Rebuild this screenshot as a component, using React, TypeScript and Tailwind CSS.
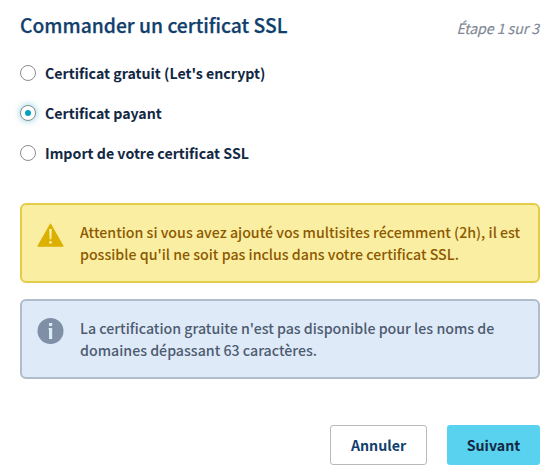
import { useState } from "react";

const options = ["Certificat gratuit (Let's encrypt)", "Certificat payant", "Import de votre certificat SSL"];

function WarningIcon() {
  return (
    <svg className="mt-[18px] h-6 w-[27px] shrink-0" viewBox="0 0 27 24">
      <path d="M13.5 .8 26.2 23.2H.8Z" fill="#dbb000" stroke="#dbb000" strokeLinejoin="round" />
      <path d="M12.2 6h2.6l-.4 10.3h-1.8Z" fill="#f9f0a5" />
      <circle cx="13.5" cy="19.4" r="1.4" fill="#f9f0a5" />
    </svg>
  );
}

function InfoIcon() {
  return (
    <svg className="mt-[17px] h-[26px] w-[27px] shrink-0" viewBox="0 0 27 26">
      <circle cx="13.5" cy="13" r="13" fill="#7f8fa5" />
      <path d="M12 5h3.2v3h-3.2ZM11.6 10h3.6v11h-3.2v-9.5h-.4Z" fill="#deeaf8" />
    </svg>
  );
}

export default function App() {
  const [selected, setSelected] = useState(1);
  return (
    <main className="h-[470px] w-[557px] overflow-hidden bg-white pr-[17px] pl-5 font-['Noto_Sans_CJK_JP',sans-serif] whitespace-nowrap">
      <header className="flex h-[53px] items-start justify-between">
        <h1 className="pt-[10px] text-[19.3px] leading-[30px] font-medium text-[#113f6d] [-webkit-text-stroke:0.25px_#113f6d]">Commander un certificat SSL</h1>
        <span className="pt-4 pr-px text-[14.2px] leading-6 tracking-[-0.08px] text-[#808894] italic [-webkit-text-stroke:0.15px_#808894]">Étape 1 sur 3</span>
      </header>
      <div className="flex flex-col">
        {options.map((option, i) => (
          <label key={option} className="flex h-10 items-center gap-[9px] text-[14.2px] leading-6 font-bold text-[#122844]">
            <input type="radio" name="certificate" className="sr-only" checked={selected === i} onChange={() => setSelected(i)} />
            <span className={selected === i ? "flex size-4 items-center justify-center rounded-full border border-[#8c8c8c] bg-white shadow-[0_0_6px_#00a2bf80]" : "size-4 rounded-full border border-[#8c8c8c] bg-white"}>
              {selected === i && <span className="size-1.5 rounded-full bg-[#00a2bf]" />}
            </span>
            <span>{option}</span>
          </label>
        ))}
      </div>
      <div className="mt-[30px] flex h-20 rounded-md border-2 border-[#e3cd47] bg-[#f9eea2] pl-[15px] text-[14.2px] font-medium text-[#8d5900]">
        <WarningIcon />
        <p className="mt-4 ml-4 leading-[22px]">
          <span className="block">Attention si vous avez ajouté vos multisites récemment (2h), il est</span>
          <span className="block">possible qu'il ne soit pas inclus dans votre certificat SSL.</span>
        </p>
      </div>
      <div className="mt-4 flex h-20 rounded-md border-2 border-[#afbccb] bg-[#deeaf8] pl-[15px] text-[14.2px] font-medium text-[#4d5b70]">
        <InfoIcon />
        <p className="mt-4 ml-4 leading-[22px]">
          <span className="block">La certification gratuite n'est pas disponible pour les noms de</span>
          <span className="block">domaines dépassant 63 caractères.</span>
        </p>
      </div>
      <div className="mt-[46px] flex justify-end gap-5 text-[14.2px] font-bold">
        <button className="h-10 w-[97px] rounded-[3px] border border-[#b9b9b9] pt-px text-[#113f6d]">Annuler</button>
        <button className="h-10 w-[93px] rounded-[3px] bg-[#59d2ef] pt-px text-[#122844]">Suivant</button>
      </div>
    </main>
  );
}
